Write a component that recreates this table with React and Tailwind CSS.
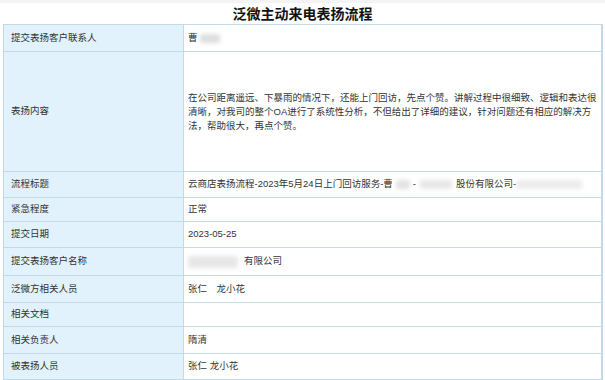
const Blur = ({ w, h = 9, className = '' }) => (
  <span
    className={`inline-block align-middle rounded-[2px] bg-[#cfcfcf] blur-[2px] ${className}`}
    style={{ width: w, height: h }}
  />
)

const rows = [
  {
    label: '提交表扬客户联系人',
    h: 'h-[26px]',
    value: (
      <span className="flex items-center">
        曹<Blur w={20} className="ml-[2px] opacity-70" />
      </span>
    ),
  },
  {
    label: '表扬内容',
    h: 'h-[120px]',
    value: (
      <div className="leading-[14px]">
        在公司距离遥远、下暴雨的情况下，还能上门回访，先点个赞。讲解过程中很细致、逻辑和表达很
        <br />
        清晰，对我司的整个OA进行了系统性分析，不但给出了详细的建议，针对问题还有相应的解决方
        <br />
        法，帮助很大，再点个赞。
      </div>
    ),
  },
  {
    label: '流程标题',
    h: 'h-[26px]',
    value: (
      <span className="flex items-center whitespace-nowrap">
        云商店表扬流程-2023年5月24日上门回访服务-曹
        <Blur w={14} className="mx-[3px] opacity-60" />
        -
        <Blur w={32} className="mx-[4px] opacity-50" />
        股份有限公司-
        <Blur w={66} className="opacity-40" />
      </span>
    ),
  },
  { label: '紧急程度', h: 'h-[24px]', value: '正常' },
  { label: '提交日期', h: 'h-[26px]', value: '2023-05-25' },
  {
    label: '提交表扬客户名称',
    h: 'h-[28px]',
    value: (
      <span className="flex items-center">
        <Blur w={50} h={12} className="opacity-50" />
        <span className="ml-[6px]">有限公司</span>
      </span>
    ),
  },
  { label: '泛微方相关人员', h: 'h-[27px]', value: '张仁　龙小花' },
  { label: '相关文档', h: 'h-[24px]', value: '' },
  { label: '相关负责人', h: 'h-[27px]', value: '隋清' },
  { label: '被表扬人员', h: 'h-[26px]', value: '张仁 龙小花' },
]

export default function App() {
  return (
    <div
      className="w-[605px] h-[380px] bg-white text-[#333] overflow-hidden"
      style={{ fontFamily: '"Liberation Sans", "Noto Sans CJK SC", sans-serif' }}
    >
      <div className="h-[3px] bg-[#f3f4f5]" />
      <h1 className="h-[21px] flex items-center justify-center text-[14px] font-bold text-[#111] leading-none">
        泛微主动来电表扬流程
      </h1>
      <div className="mx-[3px] w-[600px] border border-[#c3d9e6] border-r-2">
        {rows.map((r, i) => (
          <div
            key={r.label}
            className={`flex ${r.h} ${i > 0 ? 'border-t border-[#c3d9e6]' : ''} text-[9.5px]`}
          >
            <div className="w-[180px] shrink-0 bg-[#e1f2fc] border-r border-[#c3d9e6] flex items-center pl-[7px]">
              {r.label}
            </div>
            <div className="flex-1 flex items-center pl-[4px]">{r.value}</div>
          </div>
        ))}
      </div>
    </div>
  )
}
